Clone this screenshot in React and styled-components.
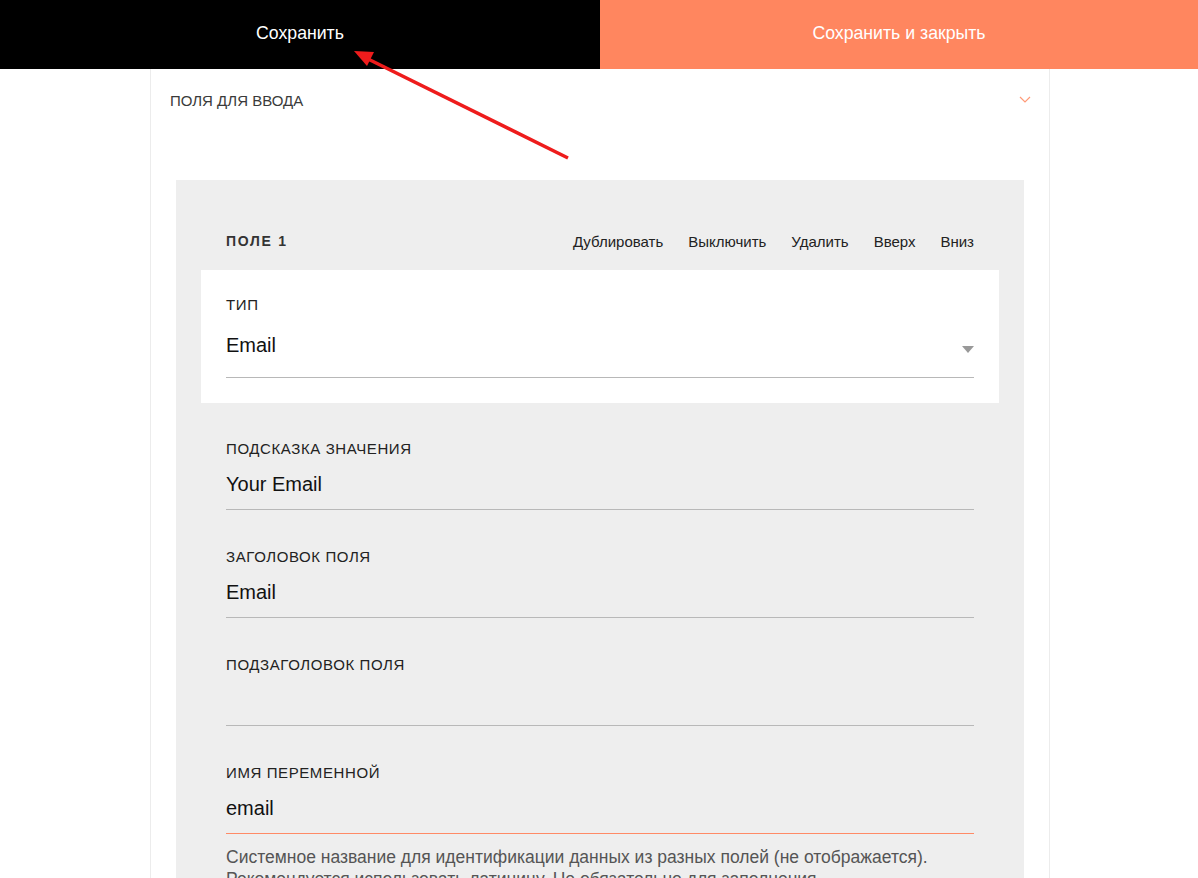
import React from "react";
import styled, { createGlobalStyle } from "styled-components";

const GlobalStyle = createGlobalStyle`
  html, body {
    margin: 0;
    padding: 0;
    background: #fff;
    overflow: hidden;
  }
  body {
    font-family: "Liberation Sans", Arial, sans-serif;
    color: #222;
  }
`;

const Page = styled.div`
  position: relative;
  height: 878px;
`;

const TopBar = styled.div`
  display: grid;
  grid-template-columns: 600px 1fr;
  height: 69px;
`;

const BarButton = styled.button`
  border: none;
  margin: 0;
  padding: 0 0 2px;
  display: flex;
  align-items: center;
  justify-content: center;
  background: ${({ accent }) => (accent ? "#ff865f" : "#000")};
  color: #fff;
  font-family: "Liberation Sans", Arial, sans-serif;
  font-size: 17.7px;
  cursor: pointer;
`;

const Panel = styled.div`
  width: 898px;
  margin-left: 150px;
  border-left: 1px solid #ececec;
  border-right: 1px solid #ececec;
  min-height: 900px;
`;

const PanelHeader = styled.div`
  display: flex;
  align-items: center;
  justify-content: space-between;
  padding: 20px 18px 0 19px;
  height: 22px;
  margin-bottom: 69px;
`;

const PanelTitle = styled.span`
  font-size: 15px;
  color: #3a3a3a;
`;

const Block = styled.div`
  margin: 0 25px;
  background: #eeeeee;
  padding: 0 25px 40px;
`;

const BlockHead = styled.div`
  display: flex;
  align-items: center;
  justify-content: space-between;
  height: 58px;
  padding: 32px 25px 0;
`;

const BlockTitle = styled.span`
  font-size: 14px;
  font-weight: bold;
  letter-spacing: 1.7px;
  color: #333;
`;

const Actions = styled.div`
  display: flex;
  gap: 25px;
`;

const Action = styled.span`
  font-size: 15px;
  color: #222;
  cursor: pointer;
`;

const WhiteBox = styled.div`
  background: #fff;
  padding: 25px;
`;

const Fields = styled.div`
  padding: 0 25px;
`;

const Field = styled.div`
  margin-top: 37px;
  &:first-child {
    margin-top: 36px;
  }
`;

const Label = styled.div`
  font-size: 15px;
  line-height: 20px;
  letter-spacing: 0.6px;
  color: #222;
  text-transform: uppercase;
`;

const ValueRow = styled.div`
  display: flex;
  align-items: center;
  justify-content: space-between;
  margin-top: ${({ gap }) => gap || 10}px;
  padding-bottom: ${({ pad }) => pad || 10}px;
  border-bottom: 1px solid ${({ active }) => (active ? "#ff8a66" : "#b8b8b8")};
`;

const Value = styled.span`
  font-size: 20px;
  line-height: 30px;
  height: 30px;
  color: #111;
`;

const Caret = styled.span`
  width: 0;
  height: 0;
  border-left: 6px solid transparent;
  border-right: 6px solid transparent;
  border-top: 7px solid #999;
  margin-top: 8px;
`;

const Hint = styled.p`
  margin: 12px 0 0;
  font-size: 17.5px;
  line-height: 22px;
  color: #555;
`;

const Overlay = styled.svg`
  position: absolute;
  left: 0;
  top: 0;
  pointer-events: none;
`;

const fields = [
  { label: "Подсказка значения", value: "Your Email" },
  { label: "Заголовок поля", value: "Email" },
  { label: "Подзаголовок поля", value: "" },
  {
    label: "Имя переменной",
    value: "email",
    active: true,
    hint:
      "Системное название для идентификации данных из разных полей (не отображается). Рекомендуется использовать латиницу. Не обязательно для заполнения.",
  },
];

const actions = ["Дублировать", "Выключить", "Удалить", "Вверх", "Вниз"];

const App = () => {
  return (
    <>
      <GlobalStyle />
      <Page>
        <TopBar>
          <BarButton>Сохранить</BarButton>
          <BarButton accent>Сохранить и закрыть</BarButton>
        </TopBar>
        <Panel>
          <PanelHeader>
            <PanelTitle>ПОЛЯ ДЛЯ ВВОДА</PanelTitle>
            <svg width="12" height="8" viewBox="0 0 12 8">
              <polyline
                points="1,1 6,6 11,1"
                fill="none"
                stroke="#ff9a78"
                strokeWidth="1.2"
              />
            </svg>
          </PanelHeader>
          <Block>
            <BlockHead>
              <BlockTitle>ПОЛЕ 1</BlockTitle>
              <Actions>
                {actions.map((a) => (
                  <Action key={a}>{a}</Action>
                ))}
              </Actions>
            </BlockHead>
            <WhiteBox>
              <Label>Тип</Label>
              <ValueRow gap={15} pad={17}>
                <Value>Email</Value>
                <Caret />
              </ValueRow>
            </WhiteBox>
            <Fields>
              {fields.map(({ label, value, active, hint }) => (
                <Field key={label}>
                  <Label>{label}</Label>
                  <ValueRow active={active}>
                    <Value>{value}</Value>
                  </ValueRow>
                  {hint && <Hint>{hint}</Hint>}
                </Field>
              ))}
            </Fields>
          </Block>
        </Panel>
        <Overlay width="1198" height="878">
          <line
            x1="568"
            y1="158"
            x2="366"
            y2="58"
            stroke="#ee1c1c"
            strokeWidth="3.5"
          />
          <polygon points="354,51 374,52 367,66" fill="#ee1c1c" />
        </Overlay>
      </Page>
    </>
  );
};

export default App;
